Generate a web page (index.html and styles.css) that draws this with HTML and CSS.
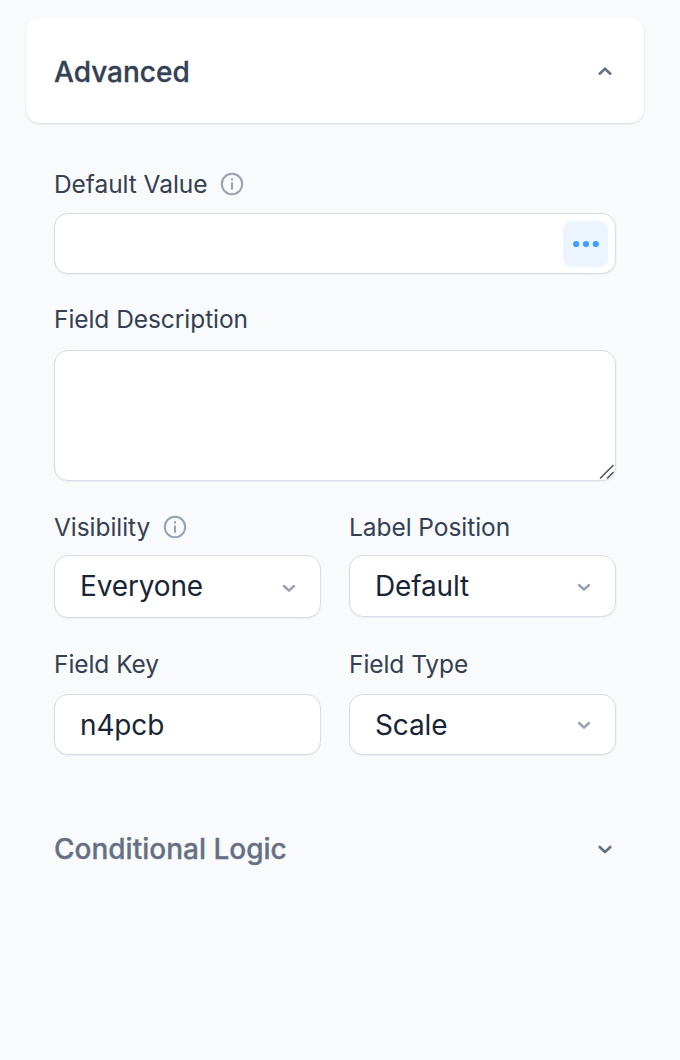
FILE: index.html
```html
<!DOCTYPE html>
<html lang="en">
<head>
<meta charset="UTF-8" />
<meta name="viewport" content="width=device-width, initial-scale=1" />
<title>Field Settings</title>
<link rel="stylesheet" href="styles.css">
</head>
<body>
<div class="panel">
  <div class="section-header open">
    <h2>Advanced</h2>
    <svg class="chevron" viewBox="0 0 16 16"><path d="M2.7 10.7 8 5.7l5.3 5" /></svg>
  </div>

  <div class="section-body">
    <div class="field default-value">
      <div class="label-row">
        <label for="default-value">Default Value</label>
        <svg class="info" viewBox="0 0 24 24"><circle cx="12" cy="12" r="10.2" /><path d="M12 11.2v5.8" /><path d="M12 7.1v.6" /></svg>
      </div>
      <div class="control">
        <input type="text" id="default-value" />
        <button class="more" type="button" aria-label="Smart values">
          <svg viewBox="0 0 26 8"><circle cx="3.2" cy="4" r="3.1" /><circle cx="13" cy="4" r="3.1" /><circle cx="22.8" cy="4" r="3.1" /></svg>
        </button>
      </div>
    </div>

    <div class="field description">
      <div class="label-row"><label for="description">Field Description</label></div>
      <div class="control area">
        <textarea id="description"></textarea>
        <svg class="grip" viewBox="0 0 16 16"><path d="M1.5 14 14 1.5M8.5 14 14 8.5" /></svg>
      </div>
    </div>

    <div class="row">
      <div class="field">
        <div class="label-row">
          <span class="label">Visibility</span>
          <svg class="info" viewBox="0 0 24 24"><circle cx="12" cy="12" r="10.2" /><path d="M12 11.2v5.8" /><path d="M12 7.1v.6" /></svg>
        </div>
        <div class="control select tall">
          <span>Everyone</span>
          <svg class="chevron" viewBox="0 0 16 16"><path d="M3 7l5 4.7L13 7" /></svg>
        </div>
      </div>
      <div class="field">
        <div class="label-row"><span class="label">Label Position</span></div>
        <div class="control select">
          <span>Default</span>
          <svg class="chevron" viewBox="0 0 16 16"><path d="M3 7l5 4.7L13 7" /></svg>
        </div>
      </div>
    </div>

    <div class="row keys">
      <div class="field">
        <div class="label-row"><label for="field-key">Field Key</label></div>
        <div class="control"><input type="text" id="field-key" value="n4pcb" /></div>
      </div>
      <div class="field">
        <div class="label-row"><span class="label">Field Type</span></div>
        <div class="control select">
          <span>Scale</span>
          <svg class="chevron" viewBox="0 0 16 16"><path d="M3 6l5 4.7L13 6" /></svg>
        </div>
      </div>
    </div>
  </div>

  <div class="section-header">
    <h2>Conditional Logic</h2>
    <svg class="chevron" viewBox="0 0 16 16"><path d="M2.7 6 8 11l5.3-5" /></svg>
  </div>
</div>
</body>
</html>
```
FILE: styles.css
```css
* {
  margin: 0;
  padding: 0;
  box-sizing: border-box;
}
body {
  background: #f9fafc;
  min-height: 100vh;
  font-family: 'Inter', sans-serif;
  color: #344054;
}
.panel {
  padding: 18px 36px 0 26px;
}
.section-header {
  display: flex;
  align-items: center;
  justify-content: space-between;
  height: 105px;
  padding: 0 31px 0 28px;
  border-radius: 14px;
  color: #667085;
}
.section-header.open {
  background: #fff;
  color: #344054;
  box-shadow: 0 1px 2px rgba(16, 24, 40, 0.14);
}
.section-header h2 {
  padding-top: 1px;
  font-size: 28px;
  font-weight: 500;
  line-height: 36px;
  -webkit-text-stroke: 0.3px currentColor;
}
.section-header.open h2 {
  padding-top: 2px;
}
svg {
  display: block;
  fill: none;
  stroke: currentColor;
  stroke-linecap: round;
  stroke-linejoin: round;
}
.chevron {
  width: 16px;
  height: 16px;
  color: #98a2b3;
  stroke-width: 2.5;
}
.section-header .chevron {
  color: #667085;
  stroke-width: 2.6;
}
.section-body {
  padding: 44px 28px 41px;
}
.label-row {
  display: flex;
  align-items: center;
  gap: 13px;
  height: 34px;
  margin-bottom: 12px;
  font-size: 24.5px;
  letter-spacing: -0.06px;
}
.info {
  width: 24px;
  height: 24px;
  color: #98a2b3;
  stroke-width: 2;
}
.control {
  display: flex;
  align-items: center;
  height: 61px;
  background: #fff;
  border: 1px solid #d9dce5;
  border-radius: 14px;
  box-shadow: 0 1px 2px rgba(16, 24, 40, 0.06);
  font-size: 28px;
  letter-spacing: -0.15px;
  color: #182536;
}
.control input,
.control textarea {
  flex: 1;
  min-width: 0;
  height: 100%;
  padding: 0 25px;
  border: none;
  outline: none;
  background: transparent;
  font: inherit;
  letter-spacing: inherit;
  color: inherit;
}
.control textarea {
  padding: 14px 25px;
  resize: none;
}
.control.area {
  position: relative;
  height: 131px;
}
.grip {
  position: absolute;
  right: 0;
  bottom: 0;
  width: 16px;
  height: 16px;
  color: #545b66;
  stroke-width: 1.7;
}
.more {
  display: flex;
  align-items: center;
  justify-content: center;
  width: 45px;
  height: 46px;
  margin-right: 7px;
  border: none;
  border-radius: 9px;
  background: #ecf5ff;
  cursor: pointer;
}
.more svg {
  width: 26px;
  height: 8px;
  fill: #409eff;
  stroke: none;
}
.description {
  margin-top: 28px;
}
.description .label-row {
  margin-bottom: 14px;
}
.row {
  display: grid;
  grid-template-columns: repeat(2, minmax(0, 1fr));
  gap: 28px;
  margin-top: 29px;
}
.row .label-row {
  margin-bottom: 11px;
}
.row .label {
  padding-bottom: 1px;
}
.select {
  justify-content: space-between;
  height: 62px;
  padding: 0 23px 0 25px;
}
.select.tall {
  height: 63px;
}
.select.tall span {
  padding-bottom: 2px;
}
.keys .label-row {
  margin-bottom: 13px;
}
.keys .label {
  padding-bottom: 0;
}
.keys .select {
  height: 61px;
}
.keys .select span {
  padding-top: 1px;
}
```
